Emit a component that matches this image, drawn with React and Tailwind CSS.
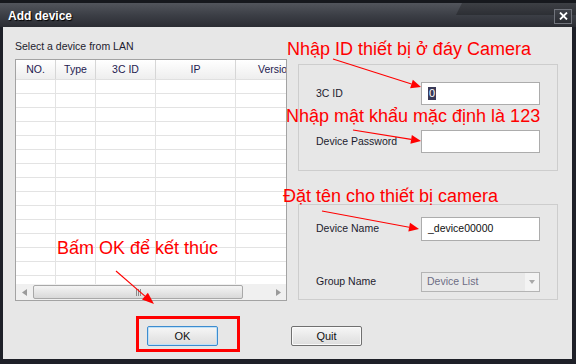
import React from 'react';

const cols = [
  { w: 40, t: 'NO.' },
  { w: 40, t: 'Type' },
  { w: 60, t: '3C ID' },
  { w: 80, t: 'IP' },
  { w: 80, t: 'Version' },
];

// mũi tên đỏ của chú thích
function Arrow({ x1, y1, x2, y2, len = 10, half = 4.5 }) {
  const dx = x2 - x1;
  const dy = y2 - y1;
  const d = Math.hypot(dx, dy);
  const ux = dx / d;
  const uy = dy / d;
  const bx = x2 - ux * len;
  const by = y2 - uy * len;
  const pts = `${x2},${y2} ${bx - uy * half},${by + ux * half} ${bx + uy * half},${by - ux * half}`;
  return (
    <g>
      <line x1={x1} y1={y1} x2={bx} y2={by} stroke="#ff0000" strokeWidth="1.1" />
      <polygon points={pts} fill="#ff0000" />
    </g>
  );
}

function DeviceTable() {
  const rows = Array.from({ length: 15 });
  return (
    <div className="mt-[6px] h-[242px] w-[272px] border border-[#a3a3a3] bg-white flex flex-col">
      <div className="flex h-[20px] shrink-0 overflow-hidden bg-gradient-to-b from-white to-[#eeeeee] border-b border-[#e0e0e0]">
        {cols.map((c) => (
          <div
            key={c.t}
            style={{ width: c.w }}
            className="shrink-0 h-full border-r border-[#d6d6d6] flex items-center justify-center text-[10.5px] text-[#1e2050] whitespace-nowrap"
          >
            {c.t}
          </div>
        ))}
      </div>
      <div className="flex-1 overflow-hidden">
        {rows.map((_, i) => (
          <div key={i} className="flex h-[14px] border-b border-[#e3e3e3]">
            {cols.map((c) => (
              <div key={c.t} style={{ width: c.w }} className="shrink-0 h-full border-r border-[#e3e3e3]" />
            ))}
          </div>
        ))}
      </div>
      <div className="h-[16px] shrink-0 bg-[#f0f0f0] flex items-center">
        <div className="w-[17px] h-full flex items-center justify-center">
          <svg width="5" height="7" viewBox="0 0 5 7"><polygon points="5,0 0,3.5 5,7" fill="#9a9a9a" /></svg>
        </div>
        <div className="w-[210px] h-[14px] rounded-[2px] border border-[#a8a8a8] bg-gradient-to-b from-[#f4f4f4] to-[#d9d9d9] flex items-center justify-center gap-[1px]">
          <div className="w-[1px] h-[7px] bg-[#8a8a8a]" />
          <div className="w-[1px] h-[7px] bg-[#8a8a8a]" />
          <div className="w-[1px] h-[7px] bg-[#8a8a8a]" />
        </div>
        <div className="flex-1" />
        <div className="w-[16px] h-full flex items-center justify-center">
          <svg width="5" height="7" viewBox="0 0 5 7"><polygon points="0,0 5,3.5 0,7" fill="#9a9a9a" /></svg>
        </div>
      </div>
    </div>
  );
}

function Field({ label, children, className = '' }) {
  return (
    <div className={`flex items-center ${className}`}>
      <div className="w-[122px] pl-[17px] text-[10.5px] text-[#1c1c2e] whitespace-nowrap">{label}</div>
      {children}
    </div>
  );
}

export default function App() {
  return (
    <div className="relative w-[576px] h-[364px] bg-[#1e2028] font-['Liberation_Sans',Arial,sans-serif] overflow-hidden">
      {/* title bar */}
      <div className="relative h-[27px] border-t-[3px] border-[#16181d] bg-gradient-to-b from-[#52555c] via-[#3c3f46] to-[#2b2d33] flex items-center justify-between px-[8px]">
        <div className="absolute right-0 top-0 w-[120px] h-[12px] bg-[#000000]/25 [clip-path:polygon(6px_0,100%_0,100%_100%,0_100%)]" />
        <span className="relative text-[12px] font-bold text-white [text-shadow:1px_1px_1px_#000] pt-[1px]">Add device</span>
        <div className="relative mr-[-4px] mt-[2px] w-[18px] h-[15px] border border-[#71747c] bg-gradient-to-b from-[#40434a] to-[#2a2c32] flex items-center justify-center">
          <svg width="9" height="8" viewBox="0 0 9 8">
            <path d="M1 0.5 L8 7.5 M8 0.5 L1 7.5" stroke="#ffffff" strokeWidth="1.8" />
          </svg>
        </div>
      </div>

      {/* content */}
      <div className="ml-[3px] w-[569px] h-[332px] bg-[#e7e7e7]">
        <div className="flex pl-[12px]">
          <div className="w-[272px] pt-[13px]">
            <div className="h-[13px] leading-[13px] text-[10.5px] text-[#1c1c2e]">Select a device from LAN</div>
            <DeviceTable />
          </div>
          <div className="ml-[11px] w-[260px] pt-[37px]">
            <div className="h-[107px] border border-[#cdcdcd] pt-[17px]">
              <Field label="3C ID" className="h-[23px]">
                <div className="w-[119px] h-[23px] border border-[#acacac] bg-white flex items-center pl-[6px]">
                  <span className="bg-[#3a3a58] text-white text-[11px] leading-[13px] px-[1px]">0</span>
                </div>
              </Field>
              <Field label="Device Password" className="h-[23px] mt-[25px]">
                <div className="w-[119px] h-[23px] border border-[#acacac] bg-white" />
              </Field>
            </div>
            <div className="mt-[33px] h-[96px] border border-[#cdcdcd] pt-[12px]">
              <Field label="Device Name" className="h-[24px]">
                <div className="w-[119px] h-[24px] border border-[#acacac] bg-white flex items-center pl-[6px] text-[10.5px] text-[#111]">
                  _device00000
                </div>
              </Field>
              <Field label="Group Name" className="h-[20px] mt-[31px]">
                <div className="w-[119px] h-[20px] border border-[#b4b4b4] bg-[#e9e9e9] flex items-center">
                  <span className="flex-1 pl-[5px] text-[10.5px] text-[#6d6d85]">Device List</span>
                  <div className="w-[14px] h-full bg-[#f3f3f3] flex items-center justify-center">
                    <svg width="6" height="4" viewBox="0 0 6 4"><polygon points="0,0 6,0 3,4" fill="#a8a8a8" /></svg>
                  </div>
                </div>
              </Field>
            </div>
          </div>
        </div>

        {/* buttons */}
        <div className="flex mt-[25px] pl-[144px] gap-[73px]">
          <button className="w-[71px] h-[20px] rounded-[2px] border border-[#3d8ccf] bg-gradient-to-b from-[#f6f6f6] to-[#dddddd] text-[11px] text-[#111] shadow-[inset_0_0_0_1px_#bfe0f7]">
            OK
          </button>
          <button className="w-[71px] h-[20px] rounded-[2px] border border-[#707070] bg-gradient-to-b from-[#f6f6f6] to-[#dddddd] text-[11px] text-[#111] shadow-[inset_0_0_0_1px_#fafafa]">
            Quit
          </button>
        </div>
      </div>

      {/* annotations */}
      <div className="absolute left-[136px] top-[316px] w-[104px] h-[36px] border-[3px] border-[#ff0000]" />
      <span className="absolute left-[287px] top-[40px] text-[18px] leading-[18px] text-[#ff0000] whitespace-nowrap">Nhập ID thiết bị ở đáy Camera</span>
      <span className="absolute left-[286px] top-[107px] text-[18px] leading-[18px] text-[#ff0000] whitespace-nowrap">Nhập mật khẩu mặc định là 123</span>
      <span className="absolute left-[283px] top-[187px] text-[18px] leading-[18px] text-[#ff0000] whitespace-nowrap">Đặt tên cho thiết bị camera</span>
      <span className="absolute left-[57px] top-[239px] text-[18px] leading-[18px] text-[#ff0000] whitespace-nowrap">Bấm OK để kết thúc</span>
      <svg className="absolute left-0 top-0 pointer-events-none" width="576" height="364">
        <Arrow x1={333} y1={59} x2={421} y2={87} />
        <Arrow x1={353} y1={130} x2={421} y2={141} />
        <Arrow x1={322} y1={211} x2={419} y2={229} />
        <Arrow x1={116} y1={271} x2={154} y2={304} len={12} half={4.5} />
      </svg>
    </div>
  );
}
